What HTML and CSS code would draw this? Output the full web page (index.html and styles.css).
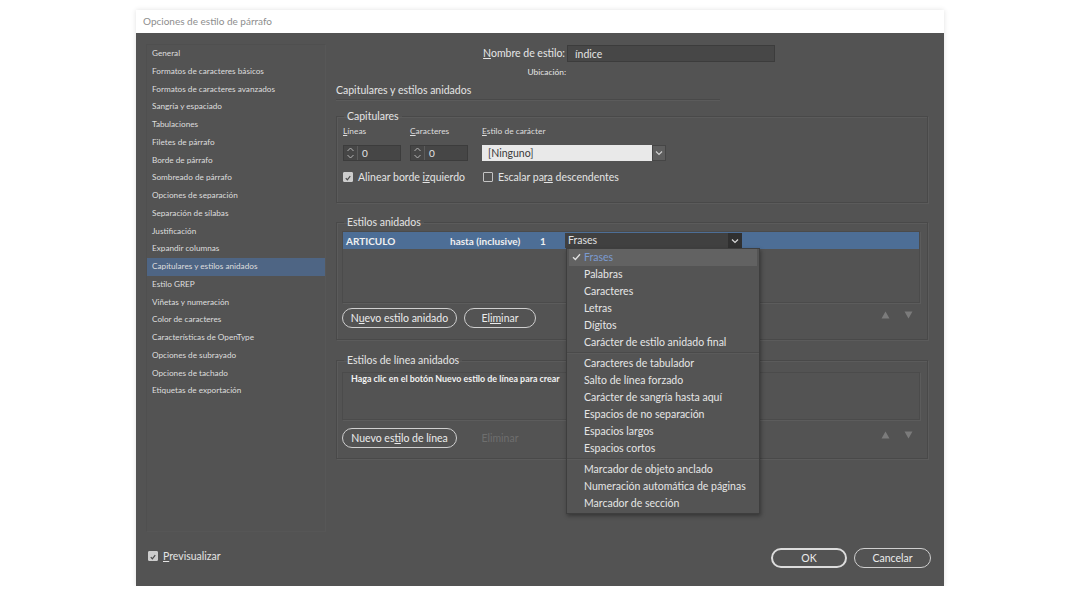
FILE: index.html
```html
<!DOCTYPE html>
<html lang="es">
<head>
    <meta charset="UTF-8">
    <title>Opciones de estilo de párrafo</title>
    <link rel="stylesheet" href="styles.css">
</head>
<body>
    <div class="dialog">
        <div class="titlebar">Opciones de estilo de párrafo</div>
        <div class="dialog-body">
            <div class="content">
                <ul class="sidebar">
                    <li>General</li>
                    <li>Formatos de caracteres básicos</li>
                    <li>Formatos de caracteres avanzados</li>
                    <li>Sangría y espaciado</li>
                    <li>Tabulaciones</li>
                    <li>Filetes de párrafo</li>
                    <li>Borde de párrafo</li>
                    <li>Sombreado de párrafo</li>
                    <li>Opciones de separación</li>
                    <li>Separación de sílabas</li>
                    <li>Justificación</li>
                    <li>Expandir columnas</li>
                    <li class="active">Capitulares y estilos anidados</li>
                    <li>Estilo GREP</li>
                    <li>Viñetas y numeración</li>
                    <li>Color de caracteres</li>
                    <li>Características de OpenType</li>
                    <li>Opciones de subrayado</li>
                    <li>Opciones de tachado</li>
                    <li>Etiquetas de exportación</li>
                </ul>

                <div class="main">
                    <div class="name-row">
                        <span class="field-label"><u>N</u>ombre de estilo:</span>
                        <div class="text-input">índice</div>
                    </div>
                    <div class="location-row">
                        <span class="field-label small">Ubicación:</span>
                    </div>
                    <div class="section-title">Capitulares y estilos anidados</div>

                    <fieldset class="group caps">
                        <legend>Capitulares</legend>
                        <div class="caps-fields">
                            <div class="field field-lines">
                                <span class="mini-label"><u>L</u>íneas</span>
                                <div class="spinner">
                                    <span class="spin-arrows">
                                        <svg width="9" height="14" viewBox="0 0 9 14"><path d="M1.5 5 L4.5 2 L7.5 5 M1.5 9 L4.5 12 L7.5 9" fill="none" stroke="#b5b5b5" stroke-width="1"/></svg>
                                    </span>
                                    <span class="spin-value">0</span>
                                </div>
                            </div>
                            <div class="field field-chars">
                                <span class="mini-label"><u>C</u>aracteres</span>
                                <div class="spinner">
                                    <span class="spin-arrows">
                                        <svg width="9" height="14" viewBox="0 0 9 14"><path d="M1.5 5 L4.5 2 L7.5 5 M1.5 9 L4.5 12 L7.5 9" fill="none" stroke="#b5b5b5" stroke-width="1"/></svg>
                                    </span>
                                    <span class="spin-value">0</span>
                                </div>
                            </div>
                            <div class="field">
                                <span class="mini-label"><u>E</u>stilo de carácter</span>
                                <div class="light-select">
                                    <span class="light-value">[Ninguno]</span>
                                    <span class="light-btn">
                                        <svg width="8" height="6" viewBox="0 0 8 6"><path d="M1 1.5 L4 4.5 L7 1.5" fill="none" stroke="#cfcfcf" stroke-width="1.2"/></svg>
                                    </span>
                                </div>
                            </div>
                        </div>
                        <div class="checks">
                            <label class="check-item first">
                                <span class="box checked">
                                    <svg width="10" height="10" viewBox="0 0 10 10"><path d="M2.2 5.2 L4.2 7.2 L7.8 2.8" fill="none" stroke="#4a4a4a" stroke-width="1.5"/></svg>
                                </span>
                                <span>Alinear borde <u>iz</u>quierdo</span>
                            </label>
                            <label class="check-item">
                                <span class="box"></span>
                                <span>Escalar pa<u>ra</u> descendentes</span>
                            </label>
                        </div>
                    </fieldset>

                    <fieldset class="group nested">
                        <legend>Estilos anidados</legend>
                        <div class="list nested-list">
                            <div class="row selected">
                                <span class="col-style">ARTICULO</span>
                                <span class="col-mode">hasta (inclusive)</span>
                                <span class="col-count">1</span>
                                <div class="row-select">
                                    <span class="row-value">Frases</span>
                                    <span class="row-btn">
                                        <svg width="8" height="6" viewBox="0 0 8 6"><path d="M1 1.5 L4 4.5 L7 1.5" fill="none" stroke="#d8d8d8" stroke-width="1.2"/></svg>
                                    </span>
                                    <ul class="menu">
                                        <li class="current">
                                            <svg class="tick" width="9" height="8" viewBox="0 0 9 8"><path d="M1 4.2 L3.4 6.5 L8 1.2" fill="none" stroke="#e0e0e0" stroke-width="1.3"/></svg>
                                            Frases
                                        </li>
                                        <li>Palabras</li>
                                        <li>Caracteres</li>
                                        <li>Letras</li>
                                        <li>Dígitos</li>
                                        <li>Carácter de estilo anidado final</li>
                                        <li class="sep"></li>
                                        <li>Caracteres de tabulador</li>
                                        <li>Salto de línea forzado</li>
                                        <li>Carácter de sangría hasta aquí</li>
                                        <li>Espacios de no separación</li>
                                        <li>Espacios largos</li>
                                        <li>Espacios cortos</li>
                                        <li class="sep"></li>
                                        <li>Marcador de objeto anclado</li>
                                        <li>Numeración automática de páginas</li>
                                        <li>Marcador de sección</li>
                                    </ul>
                                </div>
                            </div>
                        </div>
                        <div class="btn-row">
                            <button class="pill">N<u>u</u>evo estilo anidado</button>
                            <button class="pill short">El<u>im</u>inar</button>
                            <div class="order">
                                <svg width="9" height="8" viewBox="0 0 9 8"><path d="M4.5 0.5 L8.5 7.5 L0.5 7.5 Z" fill="#7b7b7b"/></svg>
                                <svg width="9" height="8" viewBox="0 0 9 8"><path d="M0.5 0.5 L8.5 0.5 L4.5 7.5 Z" fill="#7b7b7b"/></svg>
                            </div>
                        </div>
                    </fieldset>

                    <fieldset class="group line-styles">
                        <legend>Estilos de línea anidados</legend>
                        <div class="list line-list">
                            <div class="hint">Haga clic en el botón Nuevo estilo de línea para crear</div>
                        </div>
                        <div class="btn-row">
                            <button class="pill">Nuevo es<u>t</u>ilo de línea</button>
                            <button class="pill short disabled">Eliminar</button>
                            <div class="order">
                                <svg width="9" height="8" viewBox="0 0 9 8"><path d="M4.5 0.5 L8.5 7.5 L0.5 7.5 Z" fill="#7b7b7b"/></svg>
                                <svg width="9" height="8" viewBox="0 0 9 8"><path d="M0.5 0.5 L8.5 0.5 L4.5 7.5 Z" fill="#7b7b7b"/></svg>
                            </div>
                        </div>
                    </fieldset>
                </div>
            </div>

            <div class="footer">
                <label class="check-item">
                    <span class="box checked">
                        <svg width="10" height="10" viewBox="0 0 10 10"><path d="M2.2 5.2 L4.2 7.2 L7.8 2.8" fill="none" stroke="#4a4a4a" stroke-width="1.5"/></svg>
                    </span>
                    <span><u>P</u>revisualizar</span>
                </label>
                <div class="actions">
                    <button class="pill ok">OK</button>
                    <button class="pill cancel">Cancelar</button>
                </div>
            </div>
        </div>
    </div>
</body>
</html>
```

FILE: styles.css
```css
body {
    margin: 0;
    background: #fff;
    font-family: Lato, "Liberation Sans", sans-serif;
    color: #e4e4e4;
}
u {
    text-underline-offset: 1px;
}
.dialog {
    width: 808px;
    margin: 10px 0 0 136px;
    box-shadow: 0 0 5px rgba(0,0,0,0.12);
}
.titlebar {
    height: 23px;
    line-height: 23px;
    padding-left: 7px;
    font-size: 10px;
    color: #8e8e8e;
    background: #fff;
}
.dialog-body {
    height: 553px;
    box-sizing: border-box;
    background: #535353;
    padding: 11px 16px 0 10px;
    display: flex;
    flex-direction: column;
}
.content {
    display: flex;
    height: 494px;
}

/* lista de secciones */
.sidebar {
    list-style: none;
    margin: 0;
    padding: 0;
    width: 180px;
    height: 488px;
    box-sizing: border-box;
    border: 1px solid #4f4f4f;
    border-right-color: #575757;
    border-bottom-color: #565656;
}
.sidebar li {
    height: 17.75px;
    line-height: 17.75px;
    padding-left: 5px;
    font-size: 8.2px;
    color: #dedede;
    white-space: nowrap;
}
.sidebar li.active {
    background: #4e6584;
}

.main {
    margin-left: 10px;
    width: 592px;
}
.name-row,
.location-row {
    display: flex;
    align-items: center;
    height: 18px;
}
.location-row {
    margin-top: 1px;
}
.field-label {
    width: 229px;
    text-align: right;
    font-size: 10.5px;
    color: #e6e6e6;
}
.field-label.small {
    width: 230px;
    font-size: 8.4px;
}
.text-input {
    margin-left: 2px;
    width: 208px;
    height: 17px;
    line-height: 17px;
    box-sizing: border-box;
    padding-left: 7px;
    background: #474747;
    border: 1px solid #3c3c3c;
    font-size: 10.5px;
}
.section-title {
    width: 384px;
    height: 18px;
    line-height: 18px;
    font-size: 10.5px;
    border-bottom: 1px solid #494949;
    box-shadow: 0 1px 0 #5b5b5b;
}

/* grupos */
.group {
    margin: 0;
    min-width: 0;
    padding: 0 7px 0 5px;
    border: 1px solid #494949;
    box-shadow: inset 1px 1px 0 #5b5b5b, 1px 1px 0 #5b5b5b;
}
.group legend {
    margin-left: 2px;
    padding: 0 3px;
    font-size: 10.5px;
    line-height: 14px;
    color: #e4e4e4;
}
.caps {
    margin-top: 9px;
    padding-bottom: 17px;
}
.nested {
    margin-top: 12px;
    padding-bottom: 11px;
}
.line-styles {
    margin-top: 13px;
    padding-bottom: 10px;
}

.caps-fields {
    display: flex;
    padding-left: 1px;
}
.field {
    display: flex;
    flex-direction: column;
}
.field-lines {
    width: 67px;
}
.field-chars {
    width: 72px;
}
.mini-label {
    height: 17px;
    line-height: 17px;
    font-size: 8.4px;
    color: #dedede;
    margin-bottom: 5px;
}
.spinner {
    display: flex;
    width: 58px;
    height: 16px;
    box-sizing: border-box;
    background: #464646;
    border: 1px solid #3c3c3c;
}
.spin-arrows {
    width: 13px;
    display: flex;
    align-items: center;
    justify-content: center;
    border-right: 1px solid #5c5c5c;
}
.spin-value {
    padding-left: 4px;
    font-size: 10px;
    line-height: 14px;
}
.light-select {
    display: flex;
    width: 184px;
    height: 16px;
}
.light-value {
    flex: 1;
    background: #e9e9e9;
    color: #3a3a3a;
    font-size: 10.5px;
    line-height: 16px;
    padding-left: 6px;
}
.light-btn {
    width: 14px;
    background: #5e5e5e;
    border: 1px solid #464646;
    box-sizing: border-box;
    display: flex;
    align-items: center;
    justify-content: center;
}

.checks {
    display: flex;
    margin-top: 8px;
    height: 16px;
    padding-left: 1px;
}
.check-item {
    display: flex;
    align-items: center;
    gap: 5px;
    font-size: 10.5px;
    color: #e4e4e4;
}
.check-item.first {
    width: 140px;
}
.box {
    flex: none;
    width: 10px;
    height: 10px;
    box-sizing: border-box;
    border: 1px solid #c4c4c4;
    border-radius: 1px;
    display: flex;
}
.box.checked {
    background: #cdcdcd;
    border-color: #cdcdcd;
}

/* listas */
.list {
    margin-top: 2px;
    box-sizing: border-box;
    border: 1px solid #4b4b4b;
    box-shadow: 1px 1px 0 #5c5c5c;
}
.nested-list {
    height: 72px;
}
.line-list {
    margin-top: 5px;
    height: 48px;
}
.row {
    display: flex;
    align-items: center;
    height: 17px;
    font-size: 10px;
    font-weight: bold;
    color: #f0f0f0;
}
.row.selected {
    background: #4d6e96;
}
.col-style {
    width: 104px;
    padding-left: 3px;
}
.col-mode {
    width: 90px;
}
.col-count {
    width: 25px;
}
.row-select {
    position: relative;
    display: flex;
    width: 177px;
    height: 15px;
    font-weight: normal;
}
.row-value {
    flex: 1;
    background: #404040;
    padding-left: 3px;
    line-height: 15px;
    font-size: 10.5px;
    color: #e0e0e0;
}
.row-btn {
    width: 14px;
    background: #303030;
    display: flex;
    align-items: center;
    justify-content: center;
}
.hint {
    padding: 1px 0 0 8px;
    font-size: 8.9px;
    font-weight: bold;
    color: #f2f2f2;
    line-height: 10px;
}

/* menu desplegable */
.menu {
    position: absolute;
    top: 15px;
    left: 1px;
    z-index: 5;
    width: 194px;
    margin: 0;
    padding: 0 0 1px;
    list-style: none;
    box-sizing: border-box;
    background: #545454;
    border: 1px solid #3e3e3e;
    box-shadow: 1px 2px 4px rgba(0,0,0,0.35);
}
.menu li {
    position: relative;
    height: 17px;
    line-height: 17px;
    padding-left: 17px;
    font-size: 10.5px;
    color: #e6e6e6;
    white-space: nowrap;
}
.menu li.current {
    background: #626262;
    color: #7b9ad0;
    margin: 0 2px;
    padding-left: 15px;
}
.menu .tick {
    position: absolute;
    left: 3px;
    top: 4px;
}
.menu li.sep {
    height: 1px;
    margin: 1px 0 2px;
    background: #4a4a4a;
    box-shadow: 0 1px 0 #5a5a5a;
}

/* botones */
.btn-row {
    display: flex;
    align-items: center;
    gap: 7px;
    height: 20px;
    margin-top: 5px;
}
.line-styles .btn-row {
    margin-top: 8px;
}
.pill {
    height: 20px;
    width: 115px;
    padding: 0;
    background: transparent;
    border: 1px solid #cfcfcf;
    border-radius: 10px;
    color: #ececec;
    font-family: inherit;
    font-size: 10.5px;
}
.pill.short {
    width: 72px;
}
.pill.disabled {
    border-color: transparent;
    color: #6e6e6e;
}
.order {
    margin-left: auto;
    margin-right: 7px;
    display: flex;
    gap: 14px;
    margin-top: -6px;
}

.footer {
    height: 40px;
    display: flex;
    align-items: center;
    justify-content: space-between;
    padding-left: 2px;
    margin-right: -3px;
}
.footer .check-item {
    margin-top: -4px;
}
.actions {
    display: flex;
    gap: 7px;
}
.pill.ok {
    width: 76px;
    border: 2px solid #dcdcdc;
}
.pill.cancel {
    width: 77px;
}
```
